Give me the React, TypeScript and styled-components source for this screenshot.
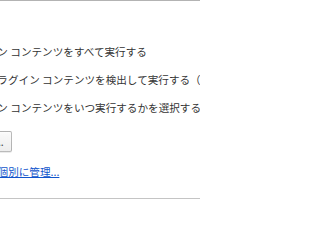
import React from "react";
import styled, { createGlobalStyle } from "styled-components";

const GlobalStyle = createGlobalStyle`
  html, body {
    margin: 0;
    padding: 0;
    background: #ffffff;
    overflow: hidden;
  }
  body {
    font-family: "Noto Sans CJK JP", "Noto Sans", sans-serif;
    color: #333333;
  }
`;

const Frame = styled.div`
  box-sizing: border-box;
  width: 200px;
  height: 199px;
  border-top: 1px solid #b3b3b3;
  border-bottom: 1px solid #c4c4c4;
  overflow: hidden;
  padding-top: 37px;
`;

// the settings column is scrolled so its left edge sits off screen
const Column = styled.div`
  display: flex;
  flex-direction: column;
  align-items: flex-start;
  margin-left: -66px;
  width: 400px;
  font-size: 10.6px;
`;

const RadioGroup = styled.div`
  display: flex;
  flex-direction: column;
`;

const Row = styled.label`
  display: flex;
  align-items: center;
  gap: 8px;
  height: 28px;
  white-space: nowrap;
  line-height: 14px;
`;

const Radio = styled.span<{ $checked?: boolean }>`
  box-sizing: border-box;
  width: 13px;
  height: 13px;
  border-radius: 50%;
  border: 1px solid #a0a0a0;
  background: ${(p) =>
    p.$checked ? "radial-gradient(circle, #444 0 3px, #fff 3.5px)" : "#fff"};
`;

const Button = styled.button`
  box-sizing: border-box;
  margin-top: 9px;
  height: 21px;
  padding: 0 7px;
  border: 1px solid rgba(0, 0, 0, 0.25);
  border-radius: 2px;
  background: linear-gradient(#fafafa, #ededed);
  box-shadow: 0 1px 0 rgba(0, 0, 0, 0.08), inset 0 1px 2px rgba(255, 255, 255, 0.75);
  font-family: inherit;
  font-size: 10.6px;
  line-height: 14px;
  color: #444444;
  white-space: nowrap;
`;

const Link = styled.a`
  margin-top: 13px;
  line-height: 14px;
  color: #1155cc;
  text-decoration: underline;
  white-space: nowrap;
  cursor: pointer;
`;

const options = [
  { text: "プラグイン コンテンツをすべて実行する", checked: false },
  { text: "重要なプラグイン コンテンツを検出して実行する（推奨）", checked: true },
  { text: "プラグイン コンテンツをいつ実行するかを選択する", checked: false },
];

export default function App() {
  return (
    <>
      <GlobalStyle />
      <Frame>
        <Column>
          <RadioGroup>
            {options.map((o) => (
              <Row key={o.text}>
                <Radio $checked={o.checked} />
                <span>{o.text}</span>
              </Row>
            ))}
          </RadioGroup>
          <Button>例外を管理...</Button>
          <Link>プラグインを個別に管理...</Link>
        </Column>
      </Frame>
    </>
  );
}
